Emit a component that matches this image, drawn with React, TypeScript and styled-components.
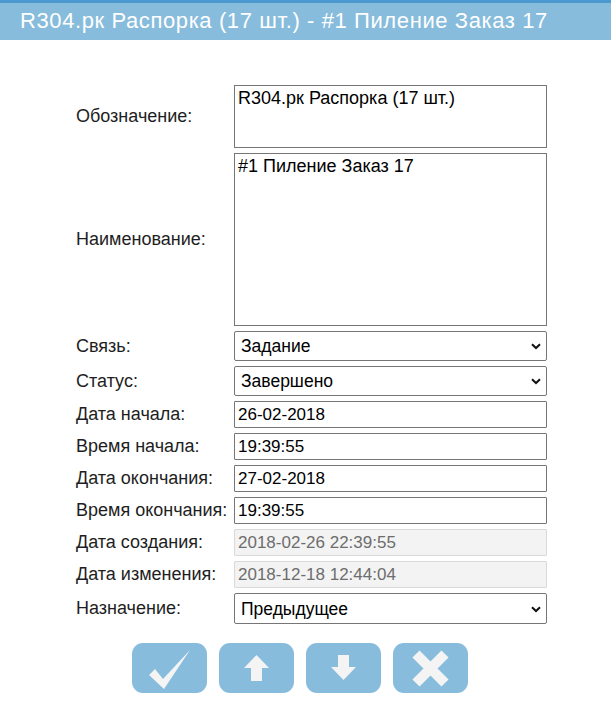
import styled, { createGlobalStyle } from "styled-components";

const GlobalStyle = createGlobalStyle`
  html, body {
    margin: 0;
    padding: 0;
    background: #ffffff;
    font-family: "Liberation Sans", Arial, sans-serif;
  }
`;

const Page = styled.div`
  width: 611px;
  height: 702px;
  background: #ffffff;
  overflow: hidden;
`;

const TitleBar = styled.header`
  height: 37px;
  border-top: 3px solid #4b99d1;
  background: #87bcdc;
  color: #ffffff;
  font-size: 22px;
  letter-spacing: 0.6px;
  line-height: 35px;
  padding-left: 20px;
  white-space: nowrap;
`;

const Form = styled.form`
  display: flex;
  flex-direction: column;
  gap: 5px;
  padding: 45px 0 0 76px;
`;

const Row = styled.div`
  display: flex;
  align-items: center;
`;

const Label = styled.label`
  width: 158px;
  flex-shrink: 0;
  font-size: 18px;
  color: #1e1e1e;
  white-space: nowrap;
`;

const TextArea = styled.textarea<{ $h: number }>`
  box-sizing: border-box;
  width: 313px;
  height: ${(p) => p.$h}px;
  margin: 0;
  padding: 2px 3px;
  border: 1px solid #767676;
  border-radius: 0;
  resize: none;
  font-family: "Liberation Sans", Arial, sans-serif;
  font-size: 18px;
  color: #000000;
  outline: none;
`;

const Input = styled.input<{ $h?: number }>`
  box-sizing: border-box;
  width: 313px;
  height: ${(p) => p.$h ?? 27}px;
  margin: 0;
  padding: 0 3px;
  border: 1px solid #767676;
  border-radius: 1px;
  font-family: "Liberation Sans", Arial, sans-serif;
  font-size: 17px;
  color: #000000;
  background: #ffffff;
  outline: none;

  &:disabled {
    background: #f3f3f3;
    border-color: #d9d9d9;
    color: #6d6d6d;
  }
`;

const SelectWrap = styled.div`
  position: relative;
  width: 313px;
`;

const Select = styled.select<{ $h: number }>`
  appearance: none;
  box-sizing: border-box;
  width: 313px;
  height: ${(p) => p.$h}px;
  margin: 0;
  padding: 0 6px;
  border: 1px solid #767676;
  border-radius: 2px;
  background: #ffffff;
  font-family: "Liberation Sans", Arial, sans-serif;
  font-size: 17.5px;
  color: #000000;
  outline: none;
`;

const Chevron = styled.svg`
  position: absolute;
  right: 6px;
  top: 50%;
  margin-top: -3px;
  pointer-events: none;
`;

const ButtonRow = styled.div`
  display: flex;
  justify-content: center;
  gap: 12px;
  padding: 19px 11px 0 0;
`;

const ActionButton = styled.button`
  width: 75px;
  height: 50px;
  padding: 0;
  border: none;
  border-radius: 11px;
  background: #88bcdd;
  display: flex;
  align-items: center;
  justify-content: center;
  cursor: pointer;
`;

function Dropdown({ value, h }: { value: string; h: number }) {
  return (
    <SelectWrap>
      <Select $h={h} defaultValue={value}>
        <option>{value}</option>
      </Select>
      <Chevron width="10" height="7" viewBox="0 0 10 7">
        <path d="M1 1.2 L5 5 L9 1.2" fill="none" stroke="#111" strokeWidth="2" />
      </Chevron>
    </SelectWrap>
  );
}

const ICON = "#f4f4f4";

function App() {
  return (
    <Page>
      <GlobalStyle />
      <TitleBar>R304.рк Распорка (17 шт.) - #1 Пиление Заказ 17</TitleBar>
      <Form>
        <Row>
          <Label>Обозначение:</Label>
          <TextArea $h={63} defaultValue="R304.рк Распорка (17 шт.)" />
        </Row>
        <Row>
          <Label>Наименование:</Label>
          <TextArea $h={173} defaultValue="#1 Пиление Заказ 17" />
        </Row>
        <Row>
          <Label>Связь:</Label>
          <Dropdown value="Задание" h={30} />
        </Row>
        <Row>
          <Label>Статус:</Label>
          <Dropdown value="Завершено" h={30} />
        </Row>
        <Row>
          <Label>Дата начала:</Label>
          <Input defaultValue="26-02-2018" />
        </Row>
        <Row>
          <Label>Время начала:</Label>
          <Input defaultValue="19:39:55" />
        </Row>
        <Row>
          <Label>Дата окончания:</Label>
          <Input defaultValue="27-02-2018" />
        </Row>
        <Row>
          <Label>Время окончания:</Label>
          <Input defaultValue="19:39:55" />
        </Row>
        <Row>
          <Label>Дата создания:</Label>
          <Input disabled defaultValue="2018-02-26 22:39:55" />
        </Row>
        <Row>
          <Label>Дата изменения:</Label>
          <Input disabled defaultValue="2018-12-18 12:44:04" />
        </Row>
        <Row>
          <Label>Назначение:</Label>
          <Dropdown value="Предыдущее" h={31} />
        </Row>
      </Form>
      <ButtonRow>
        <ActionButton type="button" title="Сохранить">
          <svg width="75" height="50" viewBox="0 0 75 50">
            <polygon points="17,32 23,26 31,36 58,7 32,46" fill={ICON} />
          </svg>
        </ActionButton>
        <ActionButton type="button" title="Вверх">
          <svg width="75" height="50" viewBox="0 0 75 50">
            <polygon points="37.5,12 50,25 43,25 43,38 32,38 32,25 25,25" fill={ICON} />
          </svg>
        </ActionButton>
        <ActionButton type="button" title="Вниз">
          <svg width="75" height="50" viewBox="0 0 75 50">
            <polygon points="32,12 43,12 43,24 50,24 37.5,37 25,24 32,24" fill={ICON} />
          </svg>
        </ActionButton>
        <ActionButton type="button" title="Закрыть">
          <svg width="75" height="50" viewBox="0 0 75 50">
            <path d="M23 11 L52 40 M52 11 L23 40" stroke={ICON} strokeWidth="10" strokeLinecap="butt" />
          </svg>
        </ActionButton>
      </ButtonRow>
    </Page>
  );
}

export default App;
